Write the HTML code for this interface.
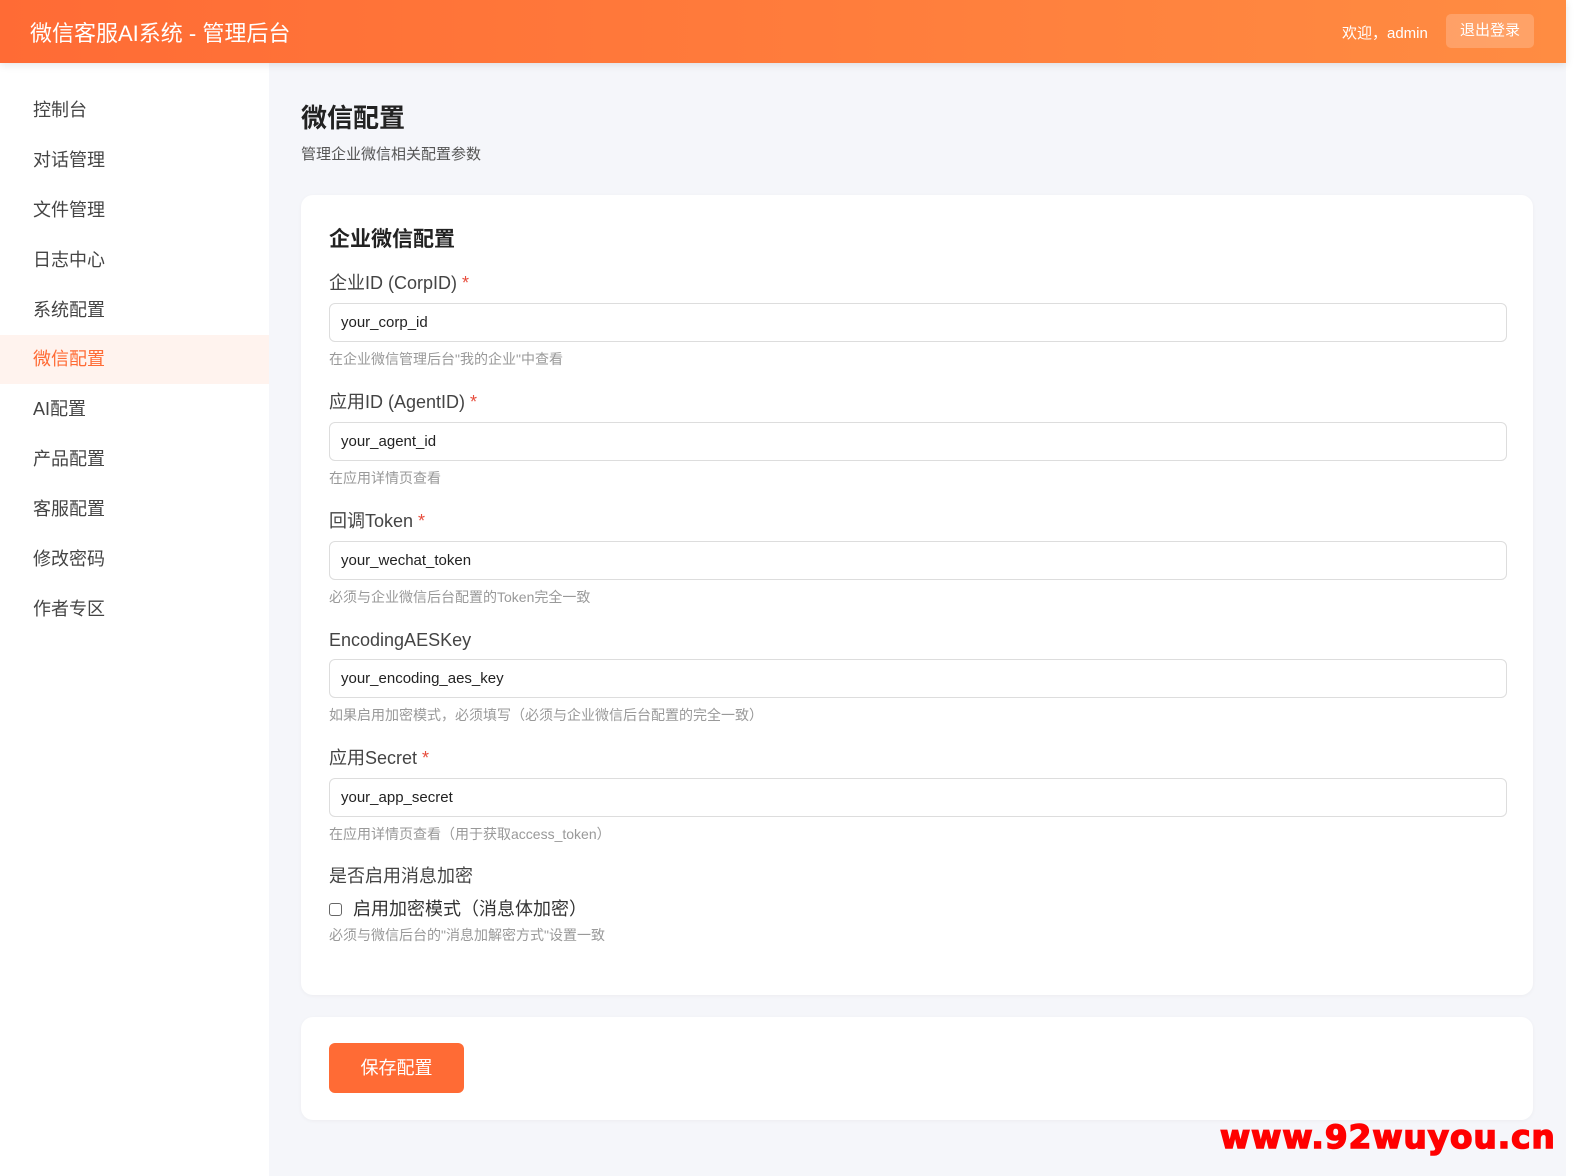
<!DOCTYPE html>
<html><head><meta charset="utf-8">
<style>
*{box-sizing:border-box;margin:0;padding:0}
body{width:1586px;height:1176px;overflow:hidden;background:#fff;font-family:"Liberation Sans","Noto Sans CJK SC",sans-serif;position:relative}
.wrap{position:absolute;left:0;top:0;width:1566px;height:1176px;background:#f5f6fa}
.hdr{position:absolute;left:0;top:0;width:1566px;height:63px;background:linear-gradient(90deg,#ff6b35,#ff8c42);box-shadow:0 2px 8px rgba(0,0,0,.1);z-index:2}
.hdr .t{position:absolute;left:30px;top:16px;color:#fff;font-size:22px}
.hdr .w{position:absolute;left:1342px;top:22px;color:#fff;font-size:15px}
.hdr .b{position:absolute;left:1446px;top:14px;width:88px;height:34px;background:rgba(255,255,255,.2);border-radius:5px;color:#fff;font-size:15px;text-align:center;line-height:34px}
.side{position:absolute;left:0;top:63px;width:269px;height:1113px;background:#fff}
.side div{height:50px;line-height:50px;padding-left:33px;font-size:18px;color:#444}
.side .a{background:#fff3ee;color:#ff6b35;height:49px;line-height:49px}
.h1{position:absolute;left:301px;top:98px;font-size:26px;font-weight:bold;color:#222}
.sub{position:absolute;left:301px;top:143px;font-size:15px;color:#555}
.card{position:absolute;left:301px;background:#fff;border-radius:12px;box-shadow:0 1px 4px rgba(0,0,0,.04);width:1232px}
.ct{position:absolute;left:28px;top:28px;font-size:21px;font-weight:bold;color:#222}
.g{position:absolute;left:28px;width:1178px}
.g .l{font-size:18px;color:#444;height:24px;line-height:24px}
.g .l i{color:#e74c3c;font-style:normal}
.g .in{margin-top:8px;height:39px;border:1px solid #ddd;border-radius:6px;padding-left:11px;line-height:37px;font-size:15px;color:#222}
.g .h{margin-top:7px;font-size:14px;color:#999}
.btn{position:absolute;left:28px;top:26px;width:135px;height:50px;background:#ff6b35;border-radius:6px;color:#fff;font-size:18px;text-align:center;line-height:50px}
.wm{position:absolute;left:1220px;top:1118px;font-family:"DejaVu Sans",sans-serif;font-weight:bold;font-size:32px;color:#f00;-webkit-text-stroke:1.5px #f00;letter-spacing:1px;transform:scaleX(1.02);transform-origin:left}
</style></head><body>
<div class="wrap">
<div class="hdr"><div class="t">微信客服AI系统 - 管理后台</div><div class="w">欢迎，admin</div><div class="b">退出登录</div></div>
<div class="side" style="padding-top:22px">
<div>控制台</div><div>对话管理</div><div>文件管理</div><div>日志中心</div><div>系统配置</div><div class="a">微信配置</div><div>AI配置</div><div>产品配置</div><div>客服配置</div><div>修改密码</div><div>作者专区</div>
</div>
<div class="h1">微信配置</div>
<div class="sub">管理企业微信相关配置参数</div>
<div class="card" style="top:195px;height:800px">
<div class="ct">企业微信配置</div>
<div class="g" style="top:76px"><div class="l">企业ID (CorpID) <i>*</i></div><div class="in">your_corp_id</div><div class="h">在企业微信管理后台"我的企业"中查看</div></div>
<div class="g" style="top:195px"><div class="l">应用ID (AgentID) <i>*</i></div><div class="in">your_agent_id</div><div class="h">在应用详情页查看</div></div>
<div class="g" style="top:314px"><div class="l">回调Token <i>*</i></div><div class="in">your_wechat_token</div><div class="h">必须与企业微信后台配置的Token完全一致</div></div>
<div class="g" style="top:433px"><div class="l">EncodingAESKey</div><div class="in" style="margin-top:7px">your_encoding_aes_key</div><div class="h">如果启用加密模式，必须填写（必须与企业微信后台配置的完全一致）</div></div>
<div class="g" style="top:551px"><div class="l">应用Secret <i>*</i></div><div class="in">your_app_secret</div><div class="h">在应用详情页查看（用于获取access_token）</div></div>
<div class="g" style="top:669px"><div class="l">是否启用消息加密</div>
<div style="margin-top:9px;font-size:18px;color:#333;height:24px;line-height:24px"><span style="display:inline-block;width:13px;height:13px;border:1px solid #666;border-radius:3px;vertical-align:-1px;margin-right:11px"></span>启用加密模式（消息体加密）</div>
<div class="h" style="margin-top:4px">必须与微信后台的"消息加解密方式"设置一致</div></div>
</div>
<div class="card" style="top:1017px;height:103px"><div class="btn">保存配置</div></div>
<div class="wm">www.92wuyou.cn</div>
</div>
</body></html>
